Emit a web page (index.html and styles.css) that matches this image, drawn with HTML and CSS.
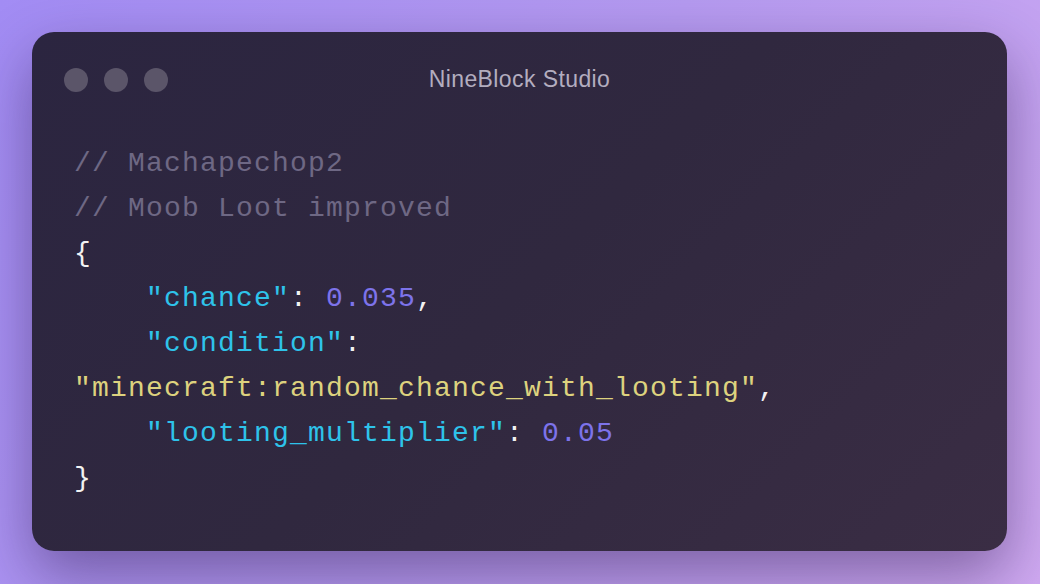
FILE: index.html
```html
<!DOCTYPE html>
<html>
<head>
<meta charset="utf-8">
<link rel="stylesheet" href="styles.css">
</head>
<body>
<div class="card">
  <div class="titlebar">
    <div class="dots"><span class="dot"></span><span class="dot"></span><span class="dot"></span></div>
    <div class="title">NineBlock Studio</div>
  </div>
  <pre class="code"><span class="c">// Machapechop2</span>
<span class="c">// Moob Loot improved</span>
<span class="p">{</span>
    <span class="k">"chance"</span><span class="p">:</span> <span class="n">0.035</span><span class="p">,</span>
    <span class="k">"condition"</span><span class="p">:</span>
<span class="s">"minecraft:random_chance_with_looting"</span><span class="p">,</span>
    <span class="k">"looting_multiplier"</span><span class="p">:</span> <span class="n">0.05</span>
<span class="p">}</span></pre>
</div>
</body>
</html>
```
FILE: styles.css
```css
html, body {
  margin: 0;
  height: 100%;
}
body {
  width: 1040px;
  height: 584px;
  box-sizing: border-box;
  padding: 32px 33px 33px 32px;
  background: linear-gradient(120deg, #a28cf4 0%, #b59af0 50%, #d0aaf2 100%);
  overflow: hidden;
}
.card {
  height: 519px;
  border-radius: 22px;
  background: linear-gradient(135deg, #2b2540 0%, #30283f 50%, #3a2d44 100%);
  box-shadow: 0 24px 60px rgba(40, 20, 70, 0.45);
  box-sizing: border-box;
  padding: 36px 32px 0 32px;
}
.titlebar {
  position: relative;
  height: 24px;
  display: flex;
  align-items: center;
}
.dots {
  display: flex;
  gap: 16px;
}
.dot {
  width: 24px;
  height: 24px;
  border-radius: 50%;
  background: #5b5569;
}
.title {
  position: absolute;
  left: 0;
  right: 0;
  top: -1px;
  text-align: center;
  font-family: "Liberation Sans", Arial, sans-serif;
  font-size: 23px;
  letter-spacing: 0.4px;
  line-height: 24px;
  color: #b3adbf;
  pointer-events: none;
}
.code {
  margin: 49px 0 0 10px;
  font-family: "Liberation Mono", "Courier New", monospace;
  font-size: 28px;
  letter-spacing: 1.2px;
  line-height: 45px;
  color: #f2f2f2;
}
.c { color: #6e6884; }
.p { color: #f2f2f2; }
.k { color: #2ec3ea; }
.n { color: #7d73ea; }
.s { color: #ddd27e; }
```
